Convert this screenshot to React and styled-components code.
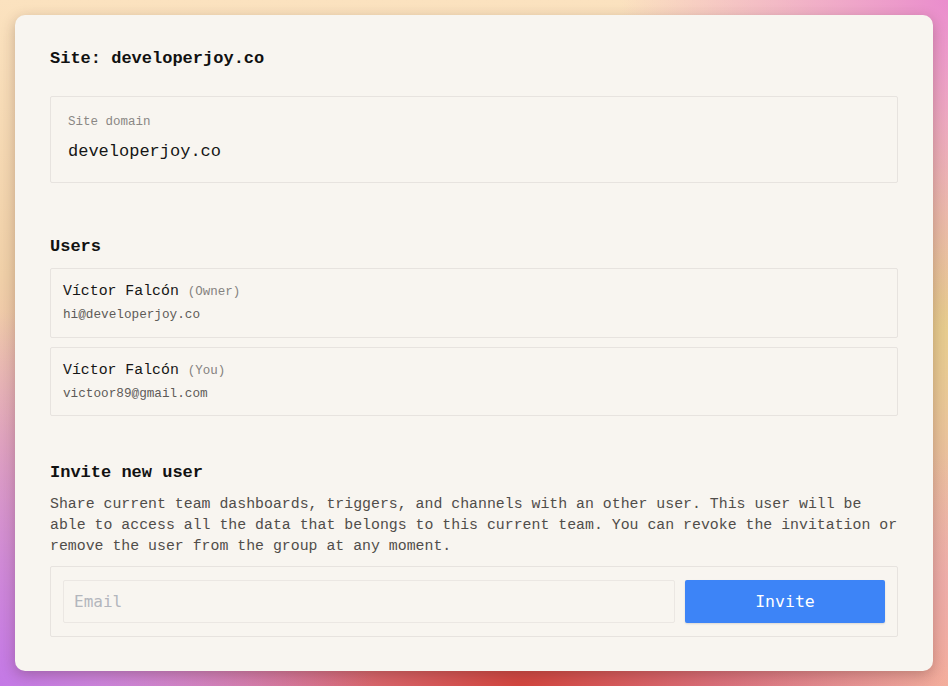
import React from 'react';
import styled, { createGlobalStyle } from 'styled-components';

const GlobalStyle = createGlobalStyle`
  * { box-sizing: border-box; }
  html, body { margin: 0; padding: 0; }
  body {
    font-family: "Liberation Mono", "DejaVu Sans Mono", monospace;
  }
`;

const Backdrop = styled.div`
  min-height: 100vh;
  padding: 15px;
  background:
    radial-gradient(circle at 100% 0%, #ea8dcd 0, rgba(234, 141, 205, 0) 28%),
    radial-gradient(circle at 0% 100%, #c479e6 0, rgba(196, 121, 230, 0) 32%),
    radial-gradient(ellipse 45% 35% at 55% 100%, #d4463f 0, rgba(212, 70, 63, 0) 100%),
    radial-gradient(circle at 100% 100%, #f3ae9c 0, rgba(243, 174, 156, 0) 20%),
    radial-gradient(ellipse 20% 40% at 100% 45%, #e6cc8c 0, rgba(230, 204, 140, 0) 100%),
    linear-gradient(180deg, #fbe2bf 0%, #f0d0a8 40%, #edb7aa 65%, #e2a0c0 100%);
`;

const Card = styled.main`
  background: #f8f5f0;
  border-radius: 10px;
  box-shadow: 0 4px 14px rgba(60, 30, 20, 0.28);
  padding: 34px 35px 35px;
  height: 656px;
  color: #141414;
`;

const Heading = styled.h2`
  margin: ${p => p.$top || 0}px 0 0;
  font-size: 17px;
  line-height: 20px;
  font-weight: 700;
  color: #111;
`;

const Box = styled.div`
  border: 1px solid #e7e3df;
  border-radius: 2px;
  padding: ${p => p.$pad};
  margin-top: ${p => p.$top || 0}px;
`;

const Label = styled.div`
  font-size: 12.5px;
  line-height: 16px;
  color: #8a8784;
`;

const Value = styled.div`
  margin-top: 11px;
  font-size: 17px;
  line-height: 22px;
  color: #151515;
`;

const UserList = styled.div`
  display: flex;
  flex-direction: column;
  gap: 9px;
  margin-top: 11px;
`;

const Name = styled.div`
  font-size: 14.85px;
  line-height: 20px;
  color: #161616;
`;

const Role = styled.span`
  font-size: 12.5px;
  color: #85827f;
`;

const Email = styled.div`
  margin-top: 5px;
  font-size: 12.7px;
  line-height: 16px;
  color: #5e5b58;
`;

const Text = styled.p`
  margin: 10.5px 0 0;
  font-size: 14.87px;
  line-height: 21.3px;
  color: #504d4a;
`;

const InviteRow = styled.form`
  display: flex;
  gap: 10px;
`;

const Input = styled.input`
  flex: 1;
  height: 43px;
  border: 1px solid #ebe7e3;
  border-radius: 2px;
  background: #f8f5f0;
  padding: 0 10px;
  font-family: "DejaVu Sans Mono", monospace;
  font-size: 16px;
  color: #222;
  outline: none;

  &::placeholder { color: #b3b6bd; }
`;

const Button = styled.button`
  width: 200px;
  height: 43px;
  border: none;
  border-radius: 2px;
  background: #3d84f7;
  color: #fff;
  font-family: "DejaVu Sans Mono", monospace;
  font-size: 16.5px;
  box-shadow: 0 1px 2px rgba(0, 0, 0, 0.12);
  cursor: pointer;
`;

const users = [
  { name: 'Víctor Falcón', role: 'Owner', email: 'hi@developerjoy.co' },
  { name: 'Víctor Falcón', role: 'You', email: 'victoor89@gmail.com' },
];

export default function App() {
  return (
    <>
      <GlobalStyle />
      <Backdrop>
        <Card>
          <Heading>Site: developerjoy.co</Heading>
          <Box $top={27} $pad="17px 17px 19px">
            <Label>Site domain</Label>
            <Value>developerjoy.co</Value>
          </Box>

          <Heading $top={54}>Users</Heading>
          <UserList>
            {users.map(u => (
              <Box key={u.email} $pad="12px 12px 13.5px">
                <Name>
                  {u.name} <Role>({u.role})</Role>
                </Name>
                <Email>{u.email}</Email>
              </Box>
            ))}
          </UserList>

          <Heading $top={47}>Invite new user</Heading>
          <Text>
            Share current team dashboards, triggers, and channels with an other user. This user will be
            able to access all the data that belongs to this current team. You can revoke the invitation or
            remove the user from the group at any moment.
          </Text>
          <Box $top={9} $pad="13px 12px">
            <InviteRow onSubmit={e => e.preventDefault()}>
              <Input type="email" placeholder="Email" />
              <Button type="submit">Invite</Button>
            </InviteRow>
          </Box>
        </Card>
      </Backdrop>
    </>
  );
}
